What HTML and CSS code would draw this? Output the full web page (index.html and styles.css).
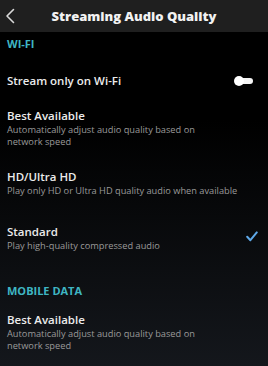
FILE: index.html
```html
<!DOCTYPE html>
<html lang="en">
<head>
<meta charset="utf-8">
<title>Streaming Audio Quality</title>
<link rel="stylesheet" href="styles.css">
</head>
<body>
<div class="screen">
  <header class="topbar">
    <svg class="back" width="10" height="16" viewBox="0 0 10 16" aria-hidden="true">
      <path d="M8.5 1.5 L2 8 L8.5 14.5" fill="none" stroke="#d8d8d8" stroke-width="1.6" stroke-linecap="round" stroke-linejoin="round"/>
    </svg>
    <h1 class="title">Streaming Audio Quality</h1>
  </header>

  <section class="section">
    <div class="section-label">WI-FI</div>
    <div class="row row-toggle">
      <div class="row-title">Stream only on Wi-Fi</div>
      <svg class="toggle" width="20" height="10" viewBox="0 0 20 10" aria-hidden="true">
        <rect x="4" y="2" width="15" height="6" rx="3" fill="#f4f4f4"/>
        <circle cx="5" cy="5" r="5" fill="#ffffff"/>
      </svg>
    </div>
    <div class="row">
      <div class="row-text">
        <div class="row-title">Best Available</div>
        <div class="row-sub">Automatically adjust audio quality based on<br>network speed</div>
      </div>
    </div>
    <div class="row">
      <div class="row-text">
        <div class="row-title">HD/Ultra HD</div>
        <div class="row-sub">Play only HD or Ultra HD quality audio when available</div>
      </div>
    </div>
    <div class="row">
      <div class="row-text">
        <div class="row-title">Standard</div>
        <div class="row-sub">Play high-quality compressed audio</div>
      </div>
      <svg class="check" width="12" height="11" viewBox="0 0 12 11" aria-hidden="true">
        <path d="M1.2 5.8 L4.4 9.2 L10.8 1.4" fill="none" stroke="#5ea8e8" stroke-width="2" stroke-linecap="round" stroke-linejoin="round"/>
      </svg>
    </div>
  </section>

  <section class="section">
    <div class="section-label">MOBILE DATA</div>
    <div class="row">
      <div class="row-text">
        <div class="row-title">Best Available</div>
        <div class="row-sub">Automatically adjust audio quality based on<br>network speed</div>
      </div>
    </div>
  </section>
</div>
</body>
</html>
```

FILE: styles.css
```css
html, body {
  margin: 0;
  padding: 0;
}

body {
  background: #000;
  font-family: "Open Sans", "Noto Sans", sans-serif;
  color: #ececec;
}

.screen {
  width: 268px;
  height: 366px;
  overflow: hidden;
  background: linear-gradient(to bottom, #000 0px, #000 120px, #14171c 366px);
}

.topbar {
  height: 32px;
  background: #1f1f1f;
  display: flex;
  align-items: center;
  justify-content: center;
  position: relative;
}

.back {
  position: absolute;
  left: 5px;
  top: 8px;
}

.title {
  margin: 0;
  font-size: 13px;
  font-weight: 800;
  color: #f2f2f2;
}

.section {
  padding: 0 7px;
}

.section + .section {
  margin-top: 14px;
}

.section-label {
  padding: 4px 0 5px;
  font-size: 11px;
  line-height: 16px;
  font-weight: 700;
  color: #3fb6c3;
}

.row {
  height: 55px;
  display: flex;
  align-items: center;
  justify-content: space-between;
}

.row-toggle {
  height: 38px;
  padding-top: 5px;
}

.row-title {
  font-size: 11.5px;
  line-height: 16px;
  font-weight: 600;
  color: #ececec;
}

.row-sub {
  font-size: 9.25px;
  line-height: 12px;
  color: #9a9a9a;
}

.toggle {
  margin-right: 7px;
}

.check {
  margin-right: 3px;
  margin-top: -2px;
}
```
